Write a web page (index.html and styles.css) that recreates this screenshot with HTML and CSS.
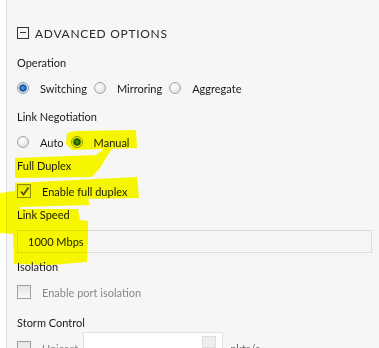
FILE: index.html
```html
<!DOCTYPE html>
<html lang="en">
<head>
<meta charset="UTF-8">
<title>Advanced Options</title>
<link rel="stylesheet" href="styles.css">
</head>
<body>
  <div class="panel">
    <div class="heading">
      <span class="toggle"></span>
      <span>Advanced Options</span>
    </div>

    <div class="group">
      <div class="group-label">Operation</div>
      <div class="row">
        <label class="opt"><span class="radio on"></span>Switching</label>
        <label class="opt"><span class="radio"></span>Mirroring</label>
        <label class="opt"><span class="radio"></span>Aggregate</label>
      </div>
    </div>

    <div class="group tight">
      <div class="group-label">Link Negotiation</div>
      <div class="row">
        <label class="opt"><span class="radio"></span>Auto</label>
        <label class="opt"><span class="radio on"></span>Manual</label>
      </div>
      <div class="sub">
        <div class="group-label">Full Duplex</div>
        <div class="row">
          <label class="opt"><span class="check on">
            <svg width="11" height="11" viewBox="0 0 11 11"><path d="M2 5.5 L4.5 8.5 L9.5 1.5" fill="none" stroke="#555" stroke-width="1.8"/></svg>
          </span>Enable full duplex</label>
        </div>
      </div>
      <div class="sub">
        <div class="group-label">Link Speed</div>
        <div class="field">1000 Mbps</div>
      </div>
    </div>

    <div class="group wide">
      <div class="group-label">Isolation</div>
      <div class="row">
        <label class="opt disabled"><span class="check"></span>Enable port isolation</label>
      </div>
    </div>

    <div class="group">
      <div class="group-label">Storm Control</div>
      <div class="row">
        <label class="opt disabled"><span class="check"></span>Unicast</label>
        <div class="num"><span class="spin"></span></div>
        <span class="unit">pkts/s</span>
      </div>
    </div>
  </div>

  <!-- highlighter marks drawn over the page -->
  <svg class="marker" width="379" height="348" viewBox="0 0 379 348">
    <g fill="#ffff00">
      <polygon points="67,133 75,131 136,130 137,148 72,150 66,144"/>
      <polygon points="15,158 96,155 108,146 113,147 106,158 100,168 92,177 15,178"/>
      <polygon points="15,183 137,177 139,198 15,200"/>
      <polygon points="0,193 15,191 15,199 88,199 90,205 20,207 20,209 78,209 80,220 88,221 88,240 87,262 50,265 14,264 13,234 0,233"/>
    </g>
  </svg>
</body>
</html>
```

FILE: styles.css
```css
body {
  margin: 0;
  background-color: #fff;
  font-family: Lato, "Open Sans", sans-serif;
  font-size: 11px;
  color: #1a1a1a;
  overflow: hidden;
}
.panel {
  margin-left: 6px;
  width: 355px;
  height: 400px;
  padding: 23px 10px 0 10px;
  background-color: #f6f6f6;
  border-left: 1px solid #dedede;
  border-right: 2px solid #c6c6c6;
}
.heading {
  display: flex;
  align-items: center;
  gap: 6px;
  height: 20px;
  margin-bottom: 10px;
  font-size: 12px;
  text-transform: uppercase;
  letter-spacing: 0.7px;
  color: #2a2a2a;
}
.toggle {
  position: relative;
  width: 10px;
  height: 10px;
  border: 1px solid #333;
}
.toggle::after {
  content: "";
  position: absolute;
  left: 2px;
  right: 2px;
  top: 4px;
  height: 1px;
  background: #333;
}
.group {
  margin-bottom: 9px;
}
.group.tight {
  margin-bottom: 4px;
}
.group.wide {
  margin-bottom: 11px;
}
.sub {
  margin-top: 4px;
}
.group-label {
  height: 20px;
  line-height: 20px;
}
.row {
  display: flex;
  align-items: center;
  gap: 7px;
  height: 20px;
  margin-top: 5px;
}
.opt {
  display: flex;
  align-items: center;
  gap: 11px;
}
.disabled {
  color: #888;
}
.radio {
  width: 10px;
  height: 10px;
  border-radius: 50%;
  border: 1px solid #a4a4a4;
  background: radial-gradient(circle at 40% 35%, #fff 0, #e4e4e4 70%, #d0d0d0 100%);
}
.radio.on {
  border-color: #8a9bb0;
  background: radial-gradient(circle, #5aa8ee 0, #1b62b8 2.5px, #17488c 3.3px, #c9dcef 4px, #f2f2f2 5px);
}
.check {
  display: flex;
  align-items: center;
  justify-content: center;
  width: 12px;
  height: 12px;
  border: 1px solid #a0a0a0;
  background: linear-gradient(#e2e2e2, #fafafa);
}
.check.on {
  border-color: #8c8c8c;
}
.field {
  height: 21px;
  margin-top: 5px;
  padding-left: 10px;
  line-height: 21px;
  border: 1px solid #dcdcdc;
}
.num {
  position: relative;
  width: 138px;
  height: 22px;
  margin-left: -2px;
  align-self: flex-start;
  margin-top: -6px;
  background: #fff;
  border: 1px solid #e2e2e2;
}
.spin {
  position: absolute;
  right: 6px;
  top: 3px;
  width: 12px;
  height: 10px;
  background: #eee;
  border: 1px solid #ddd;
}
.unit {
  color: #666;
  margin-left: 0;
}
.marker {
  position: absolute;
  left: 0;
  top: 0;
  mix-blend-mode: multiply;
  pointer-events: none;
}
```
